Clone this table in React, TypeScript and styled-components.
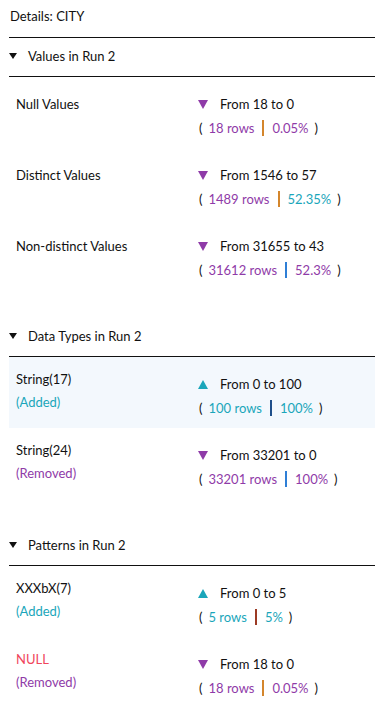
import styled, { createGlobalStyle } from "styled-components";

type Dir = "up" | "down";

type Change = {
  label: string;
  status?: "Added" | "Removed";
  labelColor?: string;
  dir: Dir;
  from: string;
  to: string;
  rows: string;
  rowsColor: string;
  pct: string;
  pctColor: string;
  barColor: string;
  highlight?: boolean;
};

type Section = {
  title: string;
  rows: Change[];
};

const PURPLE = "#8f3ba8";
const TEAL = "#1aa6ba";

const SECTIONS: Section[] = [
  {
    title: "Values in Run 2",
    rows: [
      { label: "Null Values", dir: "down", from: "18", to: "0", rows: "18 rows", rowsColor: PURPLE, pct: "0.05%", pctColor: PURPLE, barColor: "#d4862c" },
      { label: "Distinct Values", dir: "down", from: "1546", to: "57", rows: "1489 rows", rowsColor: PURPLE, pct: "52.35%", pctColor: TEAL, barColor: "#d4862c" },
      { label: "Non-distinct Values", dir: "down", from: "31655", to: "43", rows: "31612 rows", rowsColor: PURPLE, pct: "52.3%", pctColor: PURPLE, barColor: "#2f7fd6" },
    ],
  },
  {
    title: "Data Types in Run 2",
    rows: [
      { label: "String(17)", status: "Added", dir: "up", from: "0", to: "100", rows: "100 rows", rowsColor: TEAL, pct: "100%", pctColor: TEAL, barColor: "#1f4f8a", highlight: true },
      { label: "String(24)", status: "Removed", dir: "down", from: "33201", to: "0", rows: "33201 rows", rowsColor: PURPLE, pct: "100%", pctColor: PURPLE, barColor: "#2f7fd6" },
    ],
  },
  {
    title: "Patterns in Run 2",
    rows: [
      { label: "XXXbX(7)", status: "Added", dir: "up", from: "0", to: "5", rows: "5 rows", rowsColor: TEAL, pct: "5%", pctColor: TEAL, barColor: "#9c3a24" },
      { label: "NULL", labelColor: "#f0465c", status: "Removed", dir: "down", from: "18", to: "0", rows: "18 rows", rowsColor: PURPLE, pct: "0.05%", pctColor: PURPLE, barColor: "#d4862c" },
    ],
  },
];

function App() {
  return (
    <>
      <GlobalStyle />
      <Page>
        <Heading>Details: CITY</Heading>
        {SECTIONS.map((section, i) => (
          <Block key={section.title} $first={i === 0}>
            <BlockHeader>
              <Caret />
              {section.title}
            </BlockHeader>
            {section.rows.map((row) => (
              <Row key={row.label} $highlight={row.highlight}>
                <LabelCol $single={!row.status}>
                  <Label $color={row.labelColor}>{row.label}</Label>
                  {row.status && (
                    <Label $color={row.status === "Added" ? TEAL : PURPLE}>
                      ({row.status})
                    </Label>
                  )}
                </LabelCol>
                <ChangeCol>
                  <ChangeLine>
                    <Arrow $dir={row.dir} />
                    From {row.from} to {row.to}
                  </ChangeLine>
                  <ChangeLine $indent>
                    (
                    <Colored $color={row.rowsColor}>{row.rows}</Colored>
                    <Bar $color={row.barColor} />
                    <Colored $color={row.pctColor}>{row.pct}</Colored>
                    )
                  </ChangeLine>
                </ChangeCol>
              </Row>
            ))}
          </Block>
        ))}
      </Page>
    </>
  );
}

const GlobalStyle = createGlobalStyle`
  body {
    margin: 0;
    background: #ffffff;
    font-family: Lato, "Noto Sans", sans-serif;
    color: #111111;
  }
`;

const Page = styled.div`
  width: 376px;
  padding: 0 1px 0 9px;
  box-sizing: border-box;
  font-size: 13px;
`;

const Heading = styled.div`
  height: 38px;
  padding: 8px 0 0 1px;
  box-sizing: border-box;
  line-height: 16px;
  border-bottom: 1px solid #111111;
`;

const Block = styled.div<{ $first?: boolean }>`
  margin-top: ${(p) => (p.$first ? "0" : "28px")};
`;

const BlockHeader = styled.div`
  display: flex;
  align-items: center;
  height: 39px;
  padding-bottom: 3px;
  box-sizing: border-box;
  border-bottom: 1px solid #111111;
`;

const Caret = styled.span`
  width: 0;
  height: 0;
  border-left: 4px solid transparent;
  border-right: 4px solid transparent;
  border-top: 6px solid #111111;
  margin: 0 11px 0 0;
`;

const Row = styled.div<{ $highlight?: boolean }>`
  display: grid;
  grid-template-columns: 182px 1fr;
  height: 71px;
  padding-left: 7px;
  box-sizing: border-box;
  background: ${(p) => (p.$highlight ? "#f3f8fd" : "transparent")};
`;

const LabelCol = styled.div<{ $single?: boolean }>`
  display: flex;
  flex-direction: column;
  padding-top: ${(p) => (p.$single ? "15px" : "11px")};
  line-height: ${(p) => (p.$single ? "24px" : "23px")};
`;

const Label = styled.span<{ $color?: string }>`
  color: ${(p) => p.$color ?? "inherit"};
`;

const ChangeCol = styled.div`
  display: flex;
  flex-direction: column;
  padding-top: 15px;
`;

const ChangeLine = styled.div<{ $indent?: boolean }>`
  display: flex;
  align-items: center;
  height: 24px;
  padding-left: ${(p) => (p.$indent ? "1px" : "0")};
  white-space: pre;
`;

const Arrow = styled.span<{ $dir: Dir }>`
  width: 0;
  height: 0;
  border-left: 5px solid transparent;
  border-right: 5px solid transparent;
  ${(p) =>
    p.$dir === "down"
      ? `border-top: 9px solid ${PURPLE};`
      : `border-bottom: 9px solid ${TEAL};`}
  margin-right: 12px;
`;

const Colored = styled.span<{ $color: string }>`
  color: ${(p) => p.$color};
  margin: 0 6px;
`;

const Bar = styled.span<{ $color: string }>`
  width: 2px;
  height: 16px;
  margin: 0 2px;
  background: ${(p) => p.$color};
`;

export default App;
